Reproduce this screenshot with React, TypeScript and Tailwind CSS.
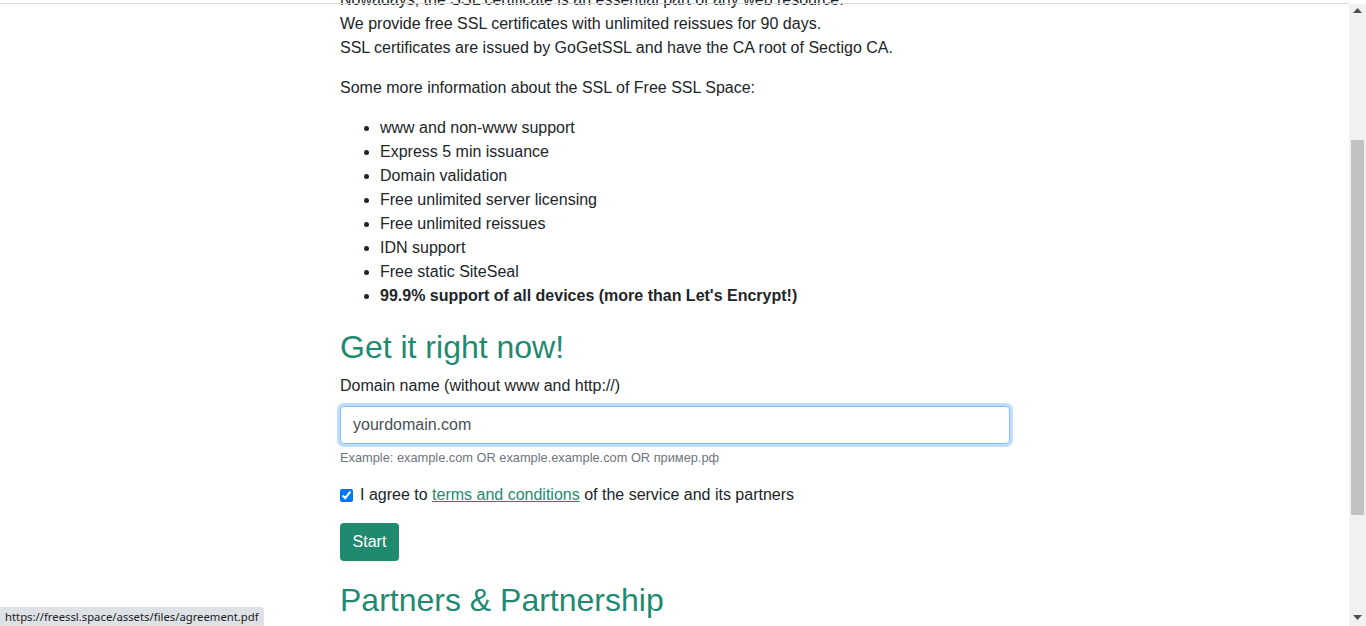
import { useState } from "react";

const features = [
  "www and non-www support",
  "Express 5 min issuance",
  "Domain validation",
  "Free unlimited server licensing",
  "Free unlimited reissues",
  "IDN support",
  "Free static SiteSeal",
];

export default function App() {
  const [domain, setDomain] = useState("");
  const [agree, setAgree] = useState(true);

  return (
    <div className="relative flex h-[626px] w-full overflow-hidden bg-white font-['Liberation_Sans',Arial,sans-serif] text-[16px] leading-6 text-[#212529]">
      <div className="absolute left-0 right-[17px] top-[3px] h-px bg-[#dadada]" />

      <main className="min-w-0 flex-1">
        <div className="ml-[340px] mt-[-12px] w-[670px]">
          <p>
            Nowadays, the SSL certificate is an essential part of any web resource.
            <br />
            We provide free SSL certificates with unlimited reissues for 90 days.
            <br />
            SSL certificates are issued by GoGetSSL and have the CA root of Sectigo CA.
          </p>
          <p className="mt-4">Some more information about the SSL of Free SSL Space:</p>
          <ul className="mt-4 list-disc pl-10">
            {features.map((item) => (
              <li key={item}>{item}</li>
            ))}
            <li className="font-bold">99.9% support of all devices (more than Let's Encrypt!)</li>
          </ul>

          <h2 className="mt-[20px] text-[32px] leading-[38px] text-[#1f8a70]">Get it right now!</h2>

          <form className="mt-2" onSubmit={(event) => event.preventDefault()}>
            <label htmlFor="domain" className="block">
              Domain name (without www and http://)
            </label>
            <input
              id="domain"
              value={domain}
              onChange={(event) => setDomain(event.target.value)}
              placeholder="yourdomain.com"
              className="mt-2 block h-[38px] w-full rounded-[4px] border border-[#80bdff] px-3 text-[16px] text-[#495057] shadow-[0_0_0_3px_rgba(0,123,255,0.25)] outline-none placeholder:text-[#495057]"
            />
            <small className="mt-1 block text-[12.8px] leading-[19px] text-[#6c757d]">
              Example: example.com OR example.example.com OR пример.рф
            </small>

            <div className="mt-[16px] flex items-center">
              <input
                id="agree"
                type="checkbox"
                checked={agree}
                onChange={() => setAgree(!agree)}
                className="h-[13px] w-[13px] accent-[#0075ff]"
              />
              <label htmlFor="agree" className="ml-[7px]">
                I agree to{" "}
                <a href="#" className="text-[#1f8a70] underline">
                  terms and conditions
                </a>{" "}
                of the service and its partners
              </label>
            </div>

            <button
              type="submit"
              className="mt-4 h-[38px] w-[59px] rounded-[4px] bg-[#1f8a6f] text-white"
            >
              Start
            </button>
          </form>

          <h2 className="mt-[20px] text-[32px] leading-[38px] text-[#1f8a70]">Partners &amp; Partnership</h2>
        </div>
      </main>

      <div className="mt-[4px] flex w-[17px] shrink-0 flex-col items-center bg-[#f1f1f1]">
        <svg width="9" height="5" viewBox="0 0 9 5" className="mt-[4px]">
          <path d="M0 5 L4.5 0 L9 5 Z" fill="#505050" />
        </svg>
        <div className="mt-[127px] h-[375px] w-[13px] bg-[#c1c1c1]" />
        <div className="flex-1" />
        <svg width="9" height="5" viewBox="0 0 9 5" className="mb-[6px]">
          <path d="M0 0 L9 0 L4.5 5 Z" fill="#505050" />
        </svg>
      </div>

      <div className="absolute bottom-0 left-0 flex h-[19px] items-center rounded-tr-[4px] bg-[#dee1e6] px-[5px] font-['Noto_Sans','Open_Sans',sans-serif] text-[11.3px] text-[#202124]">
        https://freessl.space/assets/files/agreement.pdf
      </div>
    </div>
  );
}
